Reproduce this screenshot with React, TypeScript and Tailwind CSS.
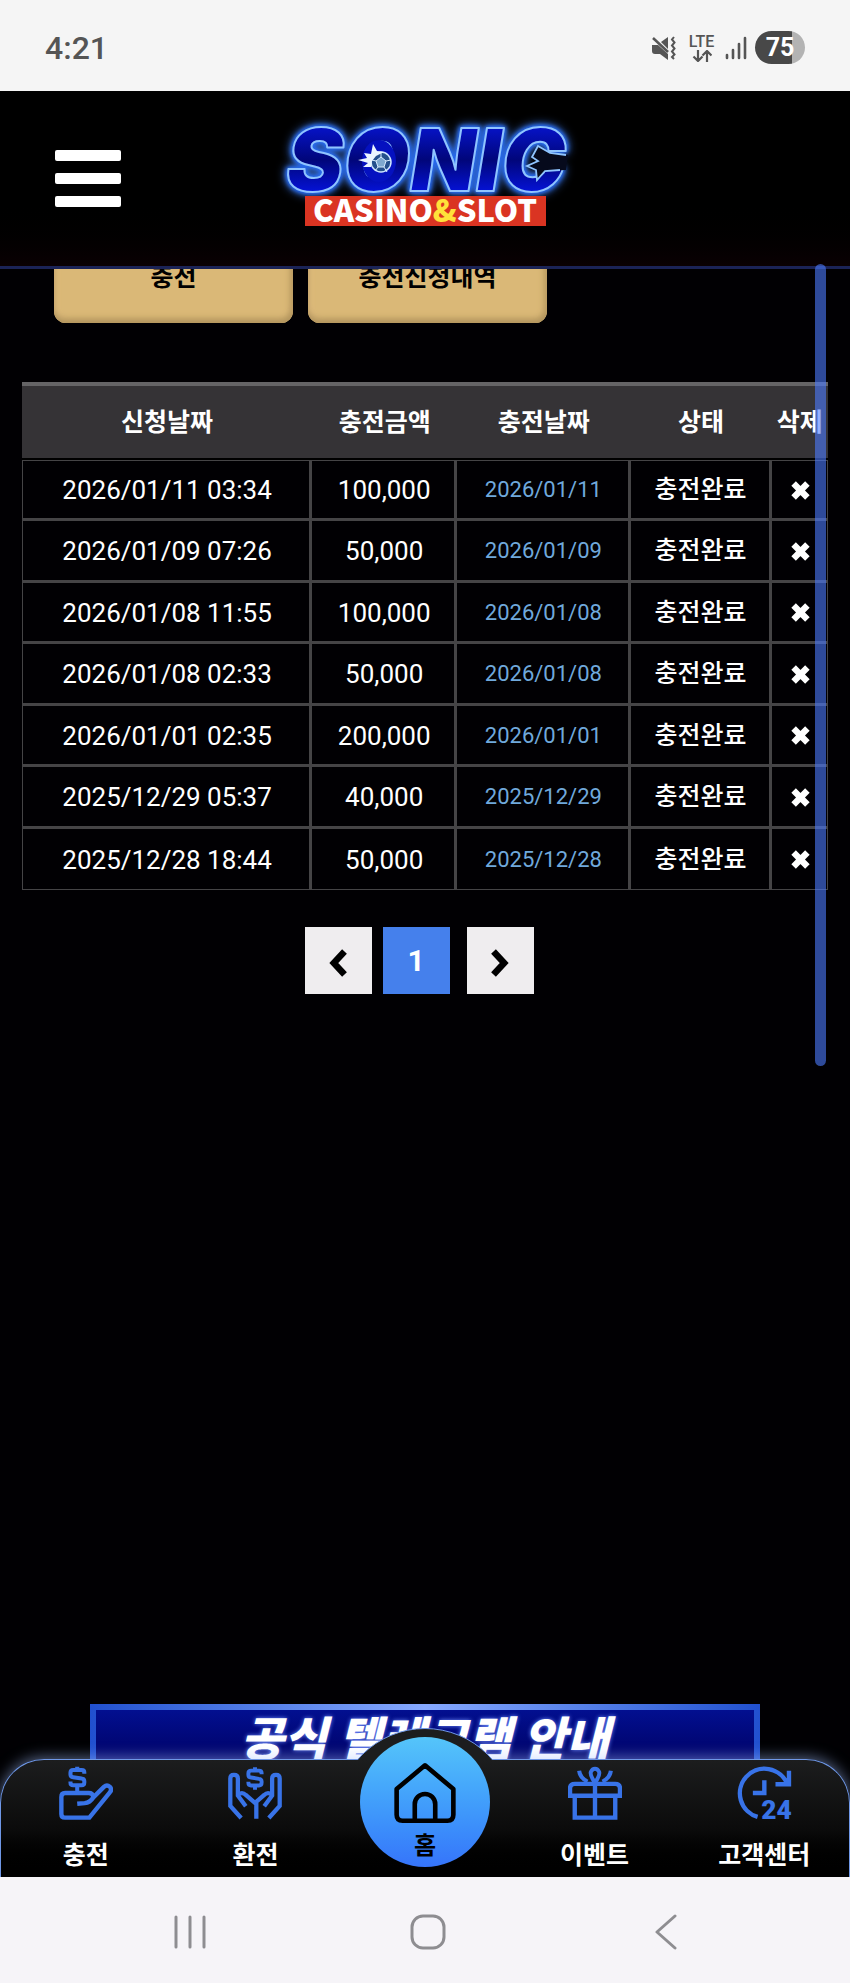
import React from 'react';

interface DepositRow {
    requested: string;
    amount: string;
    processed: string;
    status: string;
}

const ROWS: DepositRow[] = [
    { requested: '2026/01/11 03:34', amount: '100,000', processed: '2026/01/11', status: '충전완료' },
    { requested: '2026/01/09 07:26', amount: '50,000', processed: '2026/01/09', status: '충전완료' },
    { requested: '2026/01/08 11:55', amount: '100,000', processed: '2026/01/08', status: '충전완료' },
    { requested: '2026/01/08 02:33', amount: '50,000', processed: '2026/01/08', status: '충전완료' },
    { requested: '2026/01/01 02:35', amount: '200,000', processed: '2026/01/01', status: '충전완료' },
    { requested: '2025/12/29 05:37', amount: '40,000', processed: '2025/12/29', status: '충전완료' },
    { requested: '2025/12/28 18:44', amount: '50,000', processed: '2025/12/28', status: '충전완료' },
];

const COLUMNS = [
    { label: '신청날짜', width: 'w-[36%]' },
    { label: '충전금액', width: 'w-[18%]' },
    { label: '충전날짜', width: 'w-[21.5%]' },
    { label: '상태', width: 'w-[17.5%]' },
    { label: '삭제', width: 'w-[7%]' },
];

const StatusBar: React.FC = () => (
    <div className="h-[91px] shrink-0 bg-[#f5f5f5] flex items-center justify-between pl-[45px] pr-[45px] pt-1 text-[#555]">
        <span className="text-[32px] leading-8 font-medium">4:21</span>
        <div className="flex items-center">
            <svg viewBox="0 0 24 24" className="w-6 h-6 mr-3" fill="none" aria-hidden="true">
                <path d="M0 9h6l10 9v6l-8-6H3q-3 0-3-3z" fill="#555" />
                <path d="M9 6l7-5v12z" fill="#555" />
                <path d="M1 2l15 14" stroke="#555" strokeWidth="2.5" />
                <path d="M22 1l-2 2.500 2.500 3-2.500 3 2.500 3-2.500 3 2.500 3-2.500 2.500 2 2" stroke="#555" strokeWidth="2" />
            </svg>
            <div className="flex flex-col items-center w-[27px] mr-[10px]">
                <span className="text-[16px] leading-4 font-medium">LTE</span>
                <svg viewBox="0 0 20 12" className="w-5 h-3" fill="none" stroke="#555" strokeWidth="2.200" aria-hidden="true">
                    <path d="M6 0v11M1.500 6.500L6 11l4.500-4.500M15 12V1M10.500 5.500L15 1l4.500 4.500" />
                </svg>
            </div>
            <svg viewBox="0 0 22 24" className="w-[22px] h-6 mr-2" stroke="#555" strokeWidth="2.600" strokeLinecap="round" aria-hidden="true">
                <path d="M2 19v3M8 14v8M14 8v14M20 2v20" />
            </svg>
            <div className="w-[50px] h-[33px] rounded-full bg-linear-to-r from-[#484848] from-75% to-[#b3b3b3] to-75% text-white text-[25px] leading-[34px] font-bold text-center">
                75
            </div>
        </div>
    </div>
);

const Logo: React.FC = () => (
    <svg viewBox="0 0 314 116" className="w-[314px] h-[116px] shrink-0 overflow-visible" role="img" aria-label="SONIC CASINO&SLOT">
        <defs>
            <linearGradient id="letters" x1="0" y1="0" x2="0" y2="1">
                <stop offset="0.1" stopColor="#0716dc" />
                <stop offset="0.5" stopColor="#01067a" />
                <stop offset="0.85" stopColor="#0514e4" />
            </linearGradient>
        </defs>
        <text
            x="158"
            y="70"
            fontSize="86"
            textAnchor="middle"
            strokeLinejoin="round"
            fill="url(#letters)"
            stroke="#8fc4ff"
            strokeWidth="2"
            className="font-[Inter,sans-serif] font-black italic [filter:drop-shadow(0_0_2px_#2468f0)_drop-shadow(0_0_2px_#2468f0)_drop-shadow(0_0_4px_#3a6fd0)]"
        >
            SONIC
        </text>
        {/* flaming ball inside the O */}
        <ellipse cx="111" cy="40" rx="17" ry="21" fill="#0511c0" />
        <circle cx="113" cy="41" r="10" fill="#24508c" stroke="#cfe6ff" strokeWidth="1.500" />
        <path d="M113 36l5 4-2 6h-6l-2-6zM113 36v-4M118 40l5-1M116 46l3 5M110 46l-3 4M108 40l-4-1" fill="#7fa9cf" stroke="#d8ecff" strokeWidth="1" />
        <path d="M103 46l-8 0 5-4-10-3 9-2-3-5 7 1 2-10 4 7 7 1-8 4-4 5z" fill="#eaf5ff" />
        {/* bite taken out of the C */}
        <path d="M300 34L282 32 270 25 264 36 270 40 259 45 268 49 269 59 277 50 298 49z" fill="#060a1c" />
        <path d="M298 34L282 32 270 25 264 36 270 40 259 45 268 49 269 59 277 50 292 49" fill="none" stroke="#8fc4ff" strokeWidth="1.800" />
        <rect x="37" y="75" width="241" height="30" fill="#da3422" />
        <text x="157" y="101" textAnchor="middle" fontSize="31" fill="#fff" className="font-['Noto_Sans_CJK_KR',sans-serif] font-black">
            CASINO<tspan fill="#ffe23a">&amp;</tspan>SLOT
        </text>
    </svg>
);

const Header: React.FC = () => (
    <header className="relative z-10 h-[178px] shrink-0 bg-linear-to-b from-black from-60% to-[#0a0003] border-b-3 border-[#1b2357] grid grid-cols-3 items-center">
        <button aria-label="menu" className="ml-[55px] w-[66px] flex flex-col gap-3">
            <span className="h-[11px] rounded-xs bg-white" />
            <span className="h-[11px] rounded-xs bg-white" />
            <span className="h-[11px] rounded-xs bg-white" />
        </button>
        <div className="flex justify-center">
            <Logo />
        </div>
    </header>
);

const TabButton: React.FC<{ label: string }> = ({ label }) => (
    <button className="w-[239px] h-[92px] pt-[2px] rounded-xl bg-[#dab877] text-black text-[25px] font-bold shadow-[inset_0_-4px_6px_#b0935c,inset_3px_0_6px_#e6c185,inset_-3px_0_6px_#c0a066]">
        {label}
    </button>
);

const HistoryTable: React.FC = () => (
    <table className="w-full table-fixed border-separate border-spacing-0 text-center text-white">
        <thead>
            <tr className="h-[78px]">
                {COLUMNS.map((c) => (
                    <th key={c.label} className={`${c.width} p-0 pt-[2px] bg-[#353336] border-t-4 border-t-[#656466] border-b-2 border-b-black text-[25px] font-bold whitespace-nowrap`}>
                        {c.label}
                    </th>
                ))}
            </tr>
        </thead>
        <tbody className="[&>tr:first-child>td]:border-t [&>tr:last-child>td]:border-b">
            {ROWS.map((row) => (
                <tr
                    key={row.requested}
                    className="odd:h-[61px] even:h-[62px] [&>td]:p-0 [&>td]:pl-[2px] [&>td]:pt-px [&>td]:border-[#454446] [&>td]:border-b-3 [&>td]:border-r-3 [&>td:first-child]:border-l [&>td:last-child]:border-r"
                >
                    <td className="text-[26px] leading-8">{row.requested}</td>
                    <td className="text-[26px] leading-8">{row.amount}</td>
                    <td className="text-[22px] leading-8 text-[#70a9dc]">{row.processed}</td>
                    <td className="text-[25px] leading-8 font-medium">{row.status}</td>
                    <td>
                        <button aria-label="삭제" className="block mx-auto">
                            <svg viewBox="0 0 19 19" className="w-[19px] h-[19px]" stroke="#fff" strokeWidth="6.400" aria-hidden="true">
                                <path d="M2.600 2.600l13.800 13.800M16.400 2.600L2.600 16.400" />
                            </svg>
                        </button>
                    </td>
                </tr>
            ))}
        </tbody>
    </table>
);

const Pagination: React.FC = () => (
    <nav className="mt-[37px] mr-3 flex justify-center">
        <button aria-label="이전" className="w-[67px] h-[67px] mr-[11px] pt-1 bg-[#efedef] flex items-center justify-center">
            <svg viewBox="0 0 18 28" className="w-[18px] h-7" fill="none" stroke="#000" strokeWidth="6.500" aria-hidden="true">
                <path d="M15.500 2.500L4.800 14l10.700 11.500" />
            </svg>
        </button>
        <button className="w-[67px] h-[67px] mr-[17px] bg-[#4580ec] text-white text-[30px] font-bold">1</button>
        <button aria-label="다음" className="w-[67px] h-[67px] pt-1 bg-[#efedef] flex items-center justify-center">
            <svg viewBox="0 0 18 28" className="w-[18px] h-7" fill="none" stroke="#000" strokeWidth="6.500" aria-hidden="true">
                <path d="M2.500 2.500L13.200 14l-10.700 11.500" />
            </svg>
        </button>
    </nav>
);

const Banner: React.FC = () => (
    <a href="#telegram" className="mt-auto mx-[90px] h-[55px] shrink-0 overflow-hidden block bg-linear-to-r from-[#2150cf] via-[#86a8ff] to-[#2150cf] px-[6px] pt-[6px]">
        <div className="h-20 bg-linear-to-b from-[#020f90] to-[#000050] text-center text-[47px] leading-[60px] font-black italic text-white whitespace-nowrap text-shadow-[0_0_4px_#6f8dff]">
            공식 텔레그램 안내
        </div>
    </a>
);

const DepositIcon = () => (
    <svg viewBox="0 0 160 160" className="w-[54px] h-[54px]" fill="none" stroke="#3873e8" strokeWidth="13" aria-hidden="true">
        <path d="M54 112L76 110Q92 108 101 94L133 62Q142 54 151 62Q158 70 150 79L90 153H18Q7 153 7 142V92Q7 80 18 80H88Q100 80 102 92" />
        <path d="M75 23V19Q75 12 67 12H42Q34 12 34 20V25Q34 32 42 33L67 37Q75 38 75 45V49Q75 57 67 57H42Q34 57 34 49V46M54 2V12M54 57V80" strokeWidth="12" />
    </svg>
);

const WithdrawIcon = () => (
    <svg viewBox="0 0 164 160" className="w-[54px] h-[54px]" fill="none" stroke="#3873e8" strokeWidth="13" aria-hidden="true">
        <path d="M40 156L7 119V36Q7 25 18 25Q30 25 30 36V88L54 120M32 84Q44 76 54 86L82 110L110 86Q120 76 132 84M110 120L134 88V36Q134 25 146 25Q157 25 157 36V119L124 156M86 108V158" />
        <path d="M102 23V19Q102 12 94 12H70Q62 12 62 20V25Q62 32 70 33L94 37Q102 38 102 45V49Q102 57 94 57H70Q62 57 62 49V46M82 2V12M82 57V70" strokeWidth="12" />
    </svg>
);

const EventIcon = () => (
    <svg viewBox="0 0 160 160" className="w-[54px] h-[54px]" fill="none" stroke="#3873e8" strokeWidth="13" aria-hidden="true">
        <path d="M6 88V67Q6 53 20 53H140Q154 53 154 67V88ZM20 88V153H140V88M80 53V153" />
        <path d="M80 50Q64 26 68 17Q72 8 80 8Q88 8 92 17Q96 26 80 50M33 14Q36 36 58 46M127 14Q124 36 102 46" strokeWidth="12" />
    </svg>
);

const SupportIcon = () => (
    <svg viewBox="0 0 160 160" className="w-[54px] h-[54px] overflow-visible" fill="none" stroke="#3873e8" strokeWidth="13" aria-hidden="true">
        <path d="M61 151A73 73 0 1 1 149 53M154 14V54H114M81 42V80H47" />
        <text x="117" y="158" textAnchor="middle" fontSize="78" fill="#3873e8" stroke="none" className="font-[Roboto,sans-serif] font-black">24</text>
    </svg>
);

const NavItem: React.FC<{ label: string; children: React.ReactNode }> = ({ label, children }) => (
    <a href="#menu" className="flex flex-col items-center pt-[6px] gap-5 text-white">
        {children}
        <span className="text-[25px] leading-8 font-bold whitespace-nowrap">{label}</span>
    </a>
);

const BottomNav: React.FC = () => (
    <div className="relative shrink-0">
        <nav className="h-[118px] grid grid-cols-5 rounded-t-[44px] border border-b-0 border-[#6f97e6] bg-linear-to-b from-[#1c1d1e] via-[#0b0b0b] via-60% to-black shadow-[0_-2px_14px_#a8c4ff80]">
            <NavItem label="충전"><DepositIcon /></NavItem>
            <NavItem label="환전"><WithdrawIcon /></NavItem>
            <span />
            <NavItem label="이벤트"><EventIcon /></NavItem>
            <NavItem label="고객센터"><SupportIcon /></NavItem>
        </nav>
        {/* raised arch behind the home button */}
        <div className="absolute left-1/2 -translate-x-1/2 -top-[31px] w-[178px] h-8 overflow-hidden">
            <div className="w-[178px] h-[178px] rounded-full bg-[#1c1d1e] border border-[#6f97e6]" />
        </div>
        <a
            href="#home"
            className="absolute left-1/2 -translate-x-1/2 -top-[22px] w-[130px] h-[130px] rounded-full bg-linear-to-b from-[#55c5fa] to-[#3674fa] flex flex-col items-center pt-[25px] gap-[6px] text-black"
        >
            <svg viewBox="0 0 188 188" className="w-[62px] h-[62px]" fill="none" stroke="#000" strokeWidth="14" strokeLinejoin="round" aria-hidden="true">
                <path d="M94 10L180 82V160Q180 178 162 178H26Q8 178 8 160V82ZM63 178V128A31 31 0 0 1 125 128V178" />
            </svg>
            <span className="text-2xl leading-8 font-bold">홈</span>
        </a>
    </div>
);

const SystemNav: React.FC = () => (
    <div className="relative z-10 h-[106px] shrink-0 bg-[#f6f4f8] grid grid-cols-3 items-center justify-items-center pl-[71px] pr-[65px] pt-1">
        <button aria-label="최근 앱">
            <svg viewBox="0 0 32 34" className="w-8 h-[34px]" fill="none" stroke="#8e8d91" strokeWidth="3" strokeLinecap="round"><path d="M2 2v30M16 2v30M30 2v30" /></svg>
        </button>
        <button aria-label="홈 화면">
            <svg viewBox="0 0 36 36" className="w-9 h-9" fill="none" stroke="#8e8d91" strokeWidth="3"><rect x="2" y="2" width="32" height="32" rx="11" /></svg>
        </button>
        <button aria-label="뒤로">
            <svg viewBox="0 0 22 36" className="w-[22px] h-9" fill="none" stroke="#8e8d91" strokeWidth="3" strokeLinecap="round" strokeLinejoin="round"><path d="M20 2L2 18l18 16" /></svg>
        </button>
    </div>
);

export default function App() {
    return (
        <div className="relative min-h-screen flex flex-col bg-[#010003] font-[Roboto,'Noto_Sans_CJK_KR',sans-serif]">
            <StatusBar />
            <Header />
            <main className="flex-1 flex flex-col">
                <div className="-mt-[38px] pl-[54px] flex gap-[15px]">
                    <TabButton label="충전" />
                    <TabButton label="충전신청내역" />
                </div>
                <div className="mt-[59px] px-[22px]">
                    <HistoryTable />
                    <Pagination />
                </div>
                <Banner />
            </main>
            <BottomNav />
            <SystemNav />
            {/* scroll indicator */}
            <div className="absolute z-20 right-6 top-[264px] w-[11px] h-[802px] rounded-full bg-[#4d7bff]/60" />
        </div>
    );
}
